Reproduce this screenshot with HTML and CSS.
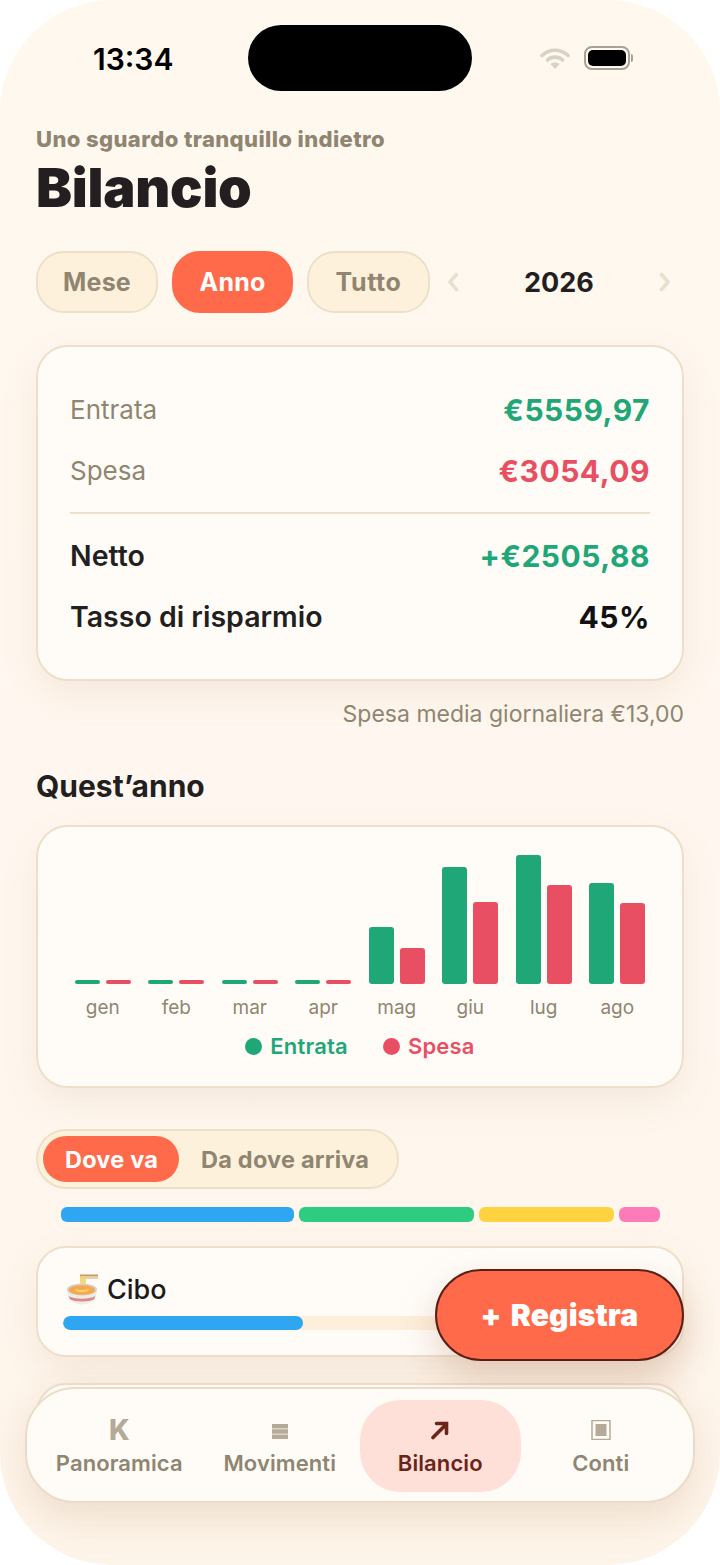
FILE: index.html

```html
<!DOCTYPE html>
<html lang="it">
<head>
  <meta charset="UTF-8">
  <title>Bilancio</title>
  <link rel="stylesheet" href="styles.css">
</head>
<body>
<div class="screen">
  <div class="status">
    <span class="clock">13:34</span>
    <div class="island"></div>
    <div class="status-icons">
      <svg class="wifi" width="30" height="22" viewBox="0 0 30 22">
        <path d="M2 8.500C9.500 1.500 20.500 1.500 28 8.500" fill="none" stroke="#d8d2c4" stroke-width="3.600" stroke-linecap="round"/>
        <path d="M7.500 13C11.800 9.200 18.200 9.200 22.500 13" fill="none" stroke="#d8d2c4" stroke-width="3.600" stroke-linecap="round"/>
        <path d="M15 22L10.500 17C13 15 17 15 19.500 17Z" fill="#d8d2c4"/>
      </svg>
      <div class="battery"><div class="battery-fill"></div></div>
      <div class="battery-cap"></div>
    </div>
  </div>

  <div class="content">
    <div class="eyebrow">Uno sguardo tranquillo indietro</div>
    <h1 class="title">Bilancio</h1>

    <div class="period-row">
      <div class="pill">Mese</div>
      <div class="pill pill-on">Anno</div>
      <div class="pill pill-wide">Tutto</div>
      <div class="year-nav">
        <svg width="12" height="20" viewBox="0 0 12 20"><path d="M9.500 2.500L3 10L9.500 17.500" fill="none" stroke="#e8e0cf" stroke-width="3.600" stroke-linecap="round" stroke-linejoin="round"/></svg>
        <span class="year">2026</span>
        <svg width="12" height="20" viewBox="0 0 12 20"><path d="M2.500 2.500L9 10L2.500 17.500" fill="none" stroke="#e8e0cf" stroke-width="3.600" stroke-linecap="round" stroke-linejoin="round"/></svg>
      </div>
    </div>

    <div class="card summary">
      <div class="sum-row"><span class="sum-label">Entrata</span><span class="sum-val green">€5559,97</span></div>
      <div class="sum-row"><span class="sum-label">Spesa</span><span class="sum-val red">€3054,09</span></div>
      <div class="sum-line"></div>
      <div class="sum-row"><span class="sum-label strong">Netto</span><span class="sum-val green">+€2505,88</span></div>
      <div class="sum-row"><span class="sum-label strong">Tasso di risparmio</span><span class="sum-val">45%</span></div>
    </div>
    <div class="note">Spesa media giornaliera €13,00</div>

    <h2 class="section">Quest’anno</h2>
    <div class="card chart">
      <div class="bars">
        <div class="month"><div class="pair"><i class="bar in" style="height:4px"></i><i class="bar out" style="height:4px"></i></div><span>gen</span></div>
        <div class="month"><div class="pair"><i class="bar in" style="height:4px"></i><i class="bar out" style="height:4px"></i></div><span>feb</span></div>
        <div class="month"><div class="pair"><i class="bar in" style="height:4px"></i><i class="bar out" style="height:4px"></i></div><span>mar</span></div>
        <div class="month"><div class="pair"><i class="bar in" style="height:4px"></i><i class="bar out" style="height:4px"></i></div><span>apr</span></div>
        <div class="month"><div class="pair"><i class="bar in" style="height:57px"></i><i class="bar out" style="height:36px"></i></div><span>mag</span></div>
        <div class="month"><div class="pair"><i class="bar in" style="height:117px"></i><i class="bar out" style="height:82px"></i></div><span>giu</span></div>
        <div class="month"><div class="pair"><i class="bar in" style="height:129px"></i><i class="bar out" style="height:99px"></i></div><span>lug</span></div>
        <div class="month"><div class="pair"><i class="bar in" style="height:101px"></i><i class="bar out" style="height:81px"></i></div><span>ago</span></div>
      </div>
      <div class="legend">
        <span class="leg green"><i class="dot dot-in"></i>Entrata</span>
        <span class="leg red"><i class="dot dot-out"></i>Spesa</span>
      </div>
    </div>

    <div class="toggle">
      <div class="toggle-item toggle-on">Dove va</div>
      <div class="toggle-item">Da dove arriva</div>
    </div>

    <div class="stack">
      <i class="seg seg-blue"></i>
      <i class="seg seg-green"></i>
      <i class="seg seg-yellow"></i>
      <i class="seg seg-pink"></i>
    </div>

    <div class="card cat">
      <div class="cat-name">
        <svg class="bowl" width="34" height="34" viewBox="0 0 34 34">
          <path d="M15 2.500H33" stroke="#c79a62" stroke-width="1.800"/>
          <path d="M15 5H33" stroke="#e0c08f" stroke-width="1.600"/>
          <path d="M16 4V17M18 4V17M20 4V17" stroke="#f2d36e" stroke-width="1.700" fill="none"/>
          <path d="M2 17C2 25 8 31.500 17 31.500C26 31.500 32 25 32 17Z" fill="#efeae6"/>
          <ellipse cx="17" cy="16.500" rx="15" ry="6" fill="#d6d0c8"/>
          <ellipse cx="17" cy="17" rx="13" ry="4.800" fill="#f4a94f"/>
          <path d="M10 15.500C14 17.500 20 17.500 24 15.500L23 18C20 19.500 14 19.500 11 18Z" fill="#f7d36b"/>
          <path d="M3.500 23C9 26.500 25 26.500 30.500 23L29 26.500C24 29 10 29 5 26.500Z" fill="#d98a8a"/>
        </svg>
        <span>Cibo</span>
      </div>
      <div class="track"><div class="track-fill" style="width:240px"></div></div>
    </div>
    <div class="card cat"></div>
  </div>

  <button class="fab">+ Registra</button>

  <nav class="tabbar">
    <div class="tab">
      <span class="tab-icon tab-k">K</span>
      <span class="tab-label">Panoramica</span>
    </div>
    <div class="tab">
      <span class="tab-icon">
        <svg width="16" height="20" viewBox="0 0 16 20"><path d="M0 4H16V8.500H0ZM0 9.300H16V13.800H0ZM0 14.600H16V19H0Z" fill="#b5aa98"/></svg>
      </span>
      <span class="tab-label">Movimenti</span>
    </div>
    <div class="tab tab-on">
      <span class="tab-icon">
        <svg width="20" height="20" viewBox="0 0 20 20"><path d="M3 17.500L16 4.500M6.500 3.500H16.500V13.500" fill="none" stroke="#6b2418" stroke-width="3.600" stroke-linecap="round"/></svg>
      </span>
      <span class="tab-label">Bilancio</span>
    </div>
    <div class="tab">
      <span class="tab-icon">
        <svg width="20" height="20" viewBox="0 0 20 20"><path d="M1 0.500H19V19.500H1Z" fill="none" stroke="#b5aa98" stroke-width="1.500"/><path d="M4.500 4H15.500V16H4.500Z" fill="#b5aa98"/></svg>
      </span>
      <span class="tab-label">Conti</span>
    </div>
  </nav>
</div>
</body>
</html>
```

FILE: styles.css

```css
* {
  box-sizing: border-box;
}
html, body {
  margin: 0;
  padding: 0;
  background: #fff;
}
body {
  font-family: Inter, "Liberation Sans", sans-serif;
  color: #231f20;
}
.screen {
  position: relative;
  width: 720px;
  height: 1565px;
  border-radius: 112px;
  overflow: hidden;
  background: linear-gradient(180deg, #fff8ef 0%, #fff7ef 65%, #fef5ea 100%);
}

/* status bar */
.status {
  height: 116px;
  position: relative;
}
.clock {
  position: absolute;
  left: 93px;
  top: 41px;
  font-size: 30px;
  line-height: 36px;
  font-weight: 600;
  color: #000;
}
.island {
  position: absolute;
  left: 248px;
  top: 25px;
  width: 224px;
  height: 66px;
  background: #000;
  border-radius: 33px;
}
.status-icons {
  position: absolute;
  left: 540px;
  top: 46px;
  display: flex;
  align-items: center;
  height: 24px;
}
.wifi {
  margin-right: 14px;
}
.battery {
  width: 46px;
  height: 24px;
  border: 2px solid #a8a294;
  border-radius: 8px;
  padding: 2px;
}
.battery-fill {
  height: 100%;
  background: #000;
  border-radius: 5px;
}
.battery-cap {
  width: 2px;
  height: 8px;
  margin-left: 1px;
  background: #a8a294;
  border-radius: 0 2px 2px 0;
}

.content {
  padding: 0 36px;
}
.eyebrow {
  font-size: 22px;
  line-height: 26px;
  font-weight: 800;
  letter-spacing: 0.4px;
  color: #8f8570;
  margin-top: 10px;
}
.title {
  margin: 4px 0 0;
  font-size: 54px;
  line-height: 64px;
  font-weight: 900;
  letter-spacing: -0.25px;
}

/* period filter */
.period-row {
  display: flex;
  align-items: center;
  gap: 14px;
  margin-top: 31px;
}
.pill {
  width: 122px;
  height: 62px;
  display: flex;
  align-items: center;
  justify-content: center;
  border-radius: 28px;
  border: 2px solid #eee0c8;
  background: #fdf1dc;
  font-size: 25px;
  font-weight: 700;
  letter-spacing: 0.2px;
  color: #8f8570;
}
.pill-on {
  width: 121px;
  background: #ff6b4a;
  border-color: #ff6b4a;
  color: #fff;
}
.pill-wide {
  width: 123px;
  letter-spacing: 0.6px;
}
.year-nav {
  flex: 1;
  display: flex;
  align-items: center;
  justify-content: space-between;
  padding: 0 13px 0 3px;
}
.year {
  font-size: 27px;
  font-weight: 700;
  color: #231f20;
}

/* cards */
.card {
  background: #fffcf8;
  border: 2px solid #eedfca;
  border-radius: 32px;
  box-shadow: 0 14px 36px rgba(160, 110, 60, 0.1);
}
.summary {
  margin-top: 32px;
  height: 336px;
  padding: 32px 32px 0;
}
.sum-row {
  display: flex;
  justify-content: space-between;
  align-items: center;
  height: 61px;
}
.sum-label {
  font-size: 26px;
  color: #8f8570;
}
.sum-label.strong {
  font-weight: 600;
  font-size: 28.500px;
  color: #231f20;
}
.sum-val {
  font-size: 30px;
  font-weight: 700;
  letter-spacing: 0.5px;
  color: #111;
}
.green {
  color: #1fa777;
}
.red {
  color: #e84f63;
}
.sum-line {
  height: 2px;
  background: #eee0cc;
  margin: 11px 0 11px;
}
.note {
  margin-top: 20px;
  text-align: right;
  font-size: 23px;
  line-height: 27px;
  color: #8f8570;
}
.section {
  margin: 40px 0 0;
  font-size: 30px;
  line-height: 36px;
  font-weight: 700;
}

/* chart */
.chart {
  margin-top: 21px;
  height: 263px;
  padding: 0 28px;
}
.bars {
  display: grid;
  grid-template-columns: repeat(8, 1fr);
}
.month {
  display: flex;
  flex-direction: column;
  align-items: center;
}
.pair {
  height: 157px;
  display: flex;
  align-items: flex-end;
  gap: 6px;
}
.bar {
  display: block;
  width: 25px;
  border-radius: 3px;
}
.bar.in {
  background: #1fa777;
}
.bar.out {
  background: #e84f63;
}
.month span {
  margin-top: 12px;
  font-size: 19px;
  line-height: 24px;
  color: #8f8570;
}
.legend {
  display: flex;
  justify-content: center;
  gap: 35px;
  margin-top: 13px;
}
.leg {
  display: flex;
  align-items: center;
  gap: 8px;
  font-size: 22px;
  line-height: 26px;
  font-weight: 600;
  letter-spacing: 0.2px;
}
.dot {
  width: 17px;
  height: 17px;
  border-radius: 50%;
}
.dot-in {
  background: #1fa777;
}
.dot-out {
  background: #e84f63;
}

/* toggle */
.toggle {
  display: inline-flex;
  margin-top: 41px;
  height: 60px;
  padding: 5px 7px 5px 5px;
  border-radius: 30px;
  border: 2px solid #eee0c8;
  background: #fdf1dc;
}
.toggle-item {
  display: flex;
  align-items: center;
  padding: 0 21px 0 22px;
  font-size: 23.500px;
  font-weight: 700;
  letter-spacing: 0.2px;
  color: #8f8570;
  border-radius: 23px;
}
.toggle-on {
  background: #ff6b4a;
  color: #fff;
}

.stack {
  display: flex;
  gap: 5px;
  margin: 18px 24px 0 25px;
  height: 15px;
}
.seg {
  display: block;
  border-radius: 6px;
}
.seg-blue {
  flex: 232;
  background: #2fa6f2;
}
.seg-green {
  flex: 175;
  background: #2ecc80;
}
.seg-yellow {
  flex: 134;
  background: #ffd23f;
}
.seg-pink {
  flex: 41;
  background: #ff7ab8;
}

/* category */
.cat {
  margin-top: 24px;
  height: 111px;
  padding: 24px 25px 0;
  border-radius: 30px;
}
.cat + .cat {
  margin-top: 26px;
}
.cat-name {
  display: flex;
  align-items: center;
  gap: 8px;
  font-size: 27px;
  line-height: 36px;
  font-weight: 500;
  color: #1c1a1a;
}
.bowl {
  margin-left: 2px;
}
.track {
  margin-top: 8px;
  height: 14px;
  border-radius: 8px;
  background: #fdefdc;
  overflow: hidden;
}
.track-fill {
  height: 100%;
  border-radius: 8px;
  background: #2fa6f2;
}

/* floating button */
.fab {
  position: absolute;
  left: 435px;
  top: 1269px;
  width: 249px;
  height: 92px;
  border-radius: 46px;
  border: 2px solid #5a2015;
  background: #ff6b4a;
  color: #fff;
  font-family: inherit;
  font-size: 30px;
  font-weight: 900;
  letter-spacing: 0.2px;
  word-spacing: 3px;
  box-shadow: 0 16px 38px rgba(160, 90, 50, 0.24);
}

/* bottom tabs */
.tabbar {
  position: absolute;
  left: 25px;
  top: 1387px;
  width: 670px;
  height: 116px;
  display: grid;
  grid-template-columns: repeat(4, 1fr);
  padding: 11px 12px 9px;
  background: #fffcf8;
  border: 2px solid #eadcc8;
  border-radius: 50px;
  box-shadow: 0 16px 50px rgba(160, 110, 60, 0.11);
}
.tab {
  display: flex;
  flex-direction: column;
  align-items: center;
  justify-content: center;
  border-radius: 40px;
}
.tab-on {
  background: #ffe0d8;
}
.tab-icon {
  height: 28px;
  display: flex;
  align-items: center;
  justify-content: center;
  font-size: 28px;
  font-weight: 800;
  color: #b5aa98;
}
.tab-label {
  margin-top: 5px;
  font-size: 22px;
  line-height: 28px;
  font-weight: 600;
  letter-spacing: 0.1px;
  color: #8f8570;
}
.tab-on .tab-label {
  color: #6b2418;
}
```
